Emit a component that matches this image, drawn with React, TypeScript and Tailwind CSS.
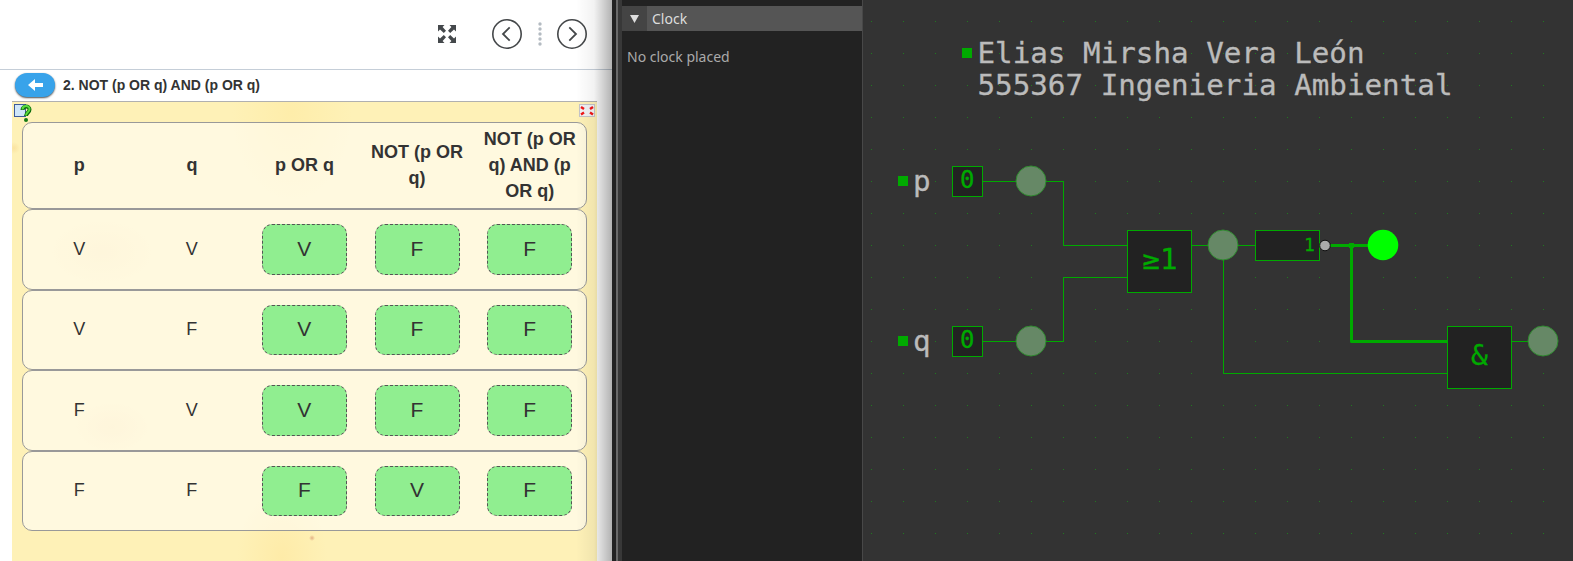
import React from "react";

const rows = [
  { h: "h-[81px]", cells: ["V", "V", "V", "F", "F"], box: "h-[51px]" },
  { h: "h-[80px]", cells: ["V", "F", "V", "F", "F"], box: "h-[50px]" },
  { h: "h-[81px]", cells: ["F", "V", "V", "F", "F"], box: "h-[51px]" },
  { h: "h-[80px]", cells: ["F", "F", "F", "V", "F"], box: "h-[50px]" },
];

function Toolbar() {
  return (
    <div className="flex h-[70px] shrink-0 items-start border-b border-[#c5ced8] pl-[438px] pt-[19px]">
      <svg width="18" height="18" viewBox="0 0 18 18" className="mt-[6px]" fill="#44484b">
        <path d="M0 0h6.500L4.600 2 8 5.800 5.800 8 2 4.600 0 6.500z" />
        <path d="M18 0h-6.500l1.900 2L10 5.800 12.200 8 16 4.600l2 1.900z" />
        <path d="M0 18h6.500L4.600 16 8 12.200 5.800 10 2 13.400l-2-1.900z" />
        <path d="M18 18h-6.500l1.900-2L10 12.200l2.200-2.200 3.800 3.400 2-1.900z" />
      </svg>
      <svg width="30" height="30" viewBox="0 0 30 30" className="ml-9" fill="none" stroke="#444749" strokeWidth="1.6">
        <circle cx="15" cy="15" r="14.2" />
        <path d="M17.700 8.300 11 15l6.700 6.700" strokeWidth="1.8" />
      </svg>
      <svg width="4" height="26" viewBox="0 0 4 26" className="ml-4 mt-[2px]" fill="#b4bbc2">
        {[3, 8, 13, 18, 23].map((y) => (
          <circle key={y} cx="2" cy={y} r="1.700" />
        ))}
      </svg>
      <svg width="30" height="30" viewBox="0 0 30 30" className="ml-[15px]" fill="none" stroke="#444749" strokeWidth="1.6">
        <circle cx="15" cy="15" r="14.2" />
        <path d="M12.300 8.300 19 15l-6.700 6.700" strokeWidth="1.8" />
      </svg>
    </div>
  );
}

function TruthTable() {
  return (
    <div className="ml-[10px] w-[565px]">
      <div className="flex h-[87px] items-center rounded-[10px] border border-[#999] bg-white/55 pb-[2px] text-center text-[18px] font-bold leading-[26px] text-[#333]">
        {["p", "q", "p OR q", "NOT (p OR q)", "NOT (p OR q) AND (p OR q)"].map((t) => (
          <div key={t} className="w-[112.8px] px-[8px]">{t}</div>
        ))}
      </div>
      {rows.map((r, i) => (
        <div key={i} className={`flex items-center rounded-[10px] border border-[#999] bg-white/55 text-[#333] ${r.h}`}>
          {r.cells.map((c, j) =>
            j < 2 ? (
              <div key={j} className="w-[112.8px] pb-px text-center text-[18px]">{c}</div>
            ) : (
              <div key={j} className="flex w-[113px] justify-center">
                <div className={`flex w-[85px] items-center justify-center rounded-[10px] border border-dashed border-[#555] bg-[#90ee90] pb-[2px] text-[21px] ${r.box}`}>
                  {c}
                </div>
              </div>
            ),
          )}
        </div>
      ))}
    </div>
  );
}

function Worksheet() {
  return (
    <div className="relative flex h-full w-[612px] shrink-0 flex-col overflow-hidden bg-white font-['Liberation_Sans',sans-serif]">
      <Toolbar />
      <div className="flex h-[30px] shrink-0 items-center pl-[15px]">
        <div className="flex h-6 w-10 items-center justify-center rounded-full bg-[#38a3ea] shadow-[0_1px_2px_rgba(0,0,0,0.7)]">
          <svg width="15" height="12" viewBox="0 0 15 12" fill="#fff">
            <path d="M7 0v4h8v4H7v4L0 6z" />
          </svg>
        </div>
        <h1 className="ml-2 whitespace-nowrap text-[14px] font-bold text-[#333]">2. NOT (p OR q) AND (p OR q)</h1>
      </div>
      <div className="mt-px ml-3 flex w-[585px] grow flex-col border-t border-[#b0b0b0] bg-[#fef1b7] bg-[radial-gradient(circle_at_2px_46px,#fae3a0_0,transparent_6px),radial-gradient(circle_at_300px_436px,#e3b184_0,transparent_3px),radial-gradient(ellipse_at_90px_150px,#fdebb0_0,transparent_50px),radial-gradient(ellipse_at_100px_325px,#fde9b0_0,transparent_36px),radial-gradient(ellipse_at_280px_10px,#feedaa_0,transparent_60px),radial-gradient(ellipse_at_270px_455px,#feeba8_0,transparent_45px)]">
        <div className="flex h-5 justify-between pl-[2px] pr-[2px] pt-[2px]">
          <svg width="17" height="18" viewBox="0 0 17 18" className="overflow-visible">
            <rect x=".5" y=".5" width="11" height="12" fill="#cfe6fa" stroke="#3c5a9a" />
            <path d="M8.500 6c0-4.500 7-4.500 7-.5 0 3.500-3.500 3-3.500 6.500" fill="none" stroke="#0a6a0a" strokeWidth="4" />
            <path d="M8.500 5.500c0-4.500 7-4.500 7-.5 0 3.500-3.500 3-3.500 6.500" fill="none" stroke="#5bdc3e" strokeWidth="2" />
            <circle cx="12" cy="16" r="2" fill="#137a13" />
          </svg>
          <svg width="16" height="13" viewBox="0 0 16 13">
            <rect width="16" height="13" fill="#c4c4c8" />
            <rect x="1" y="1" width="14" height="11" fill="#f2f2f4" />
            <path d="M2 3l3 2M14 3l-3 2M2 10.500l3-2M14 10.500l-3-2" stroke="#f01818" strokeWidth="2.400" />
          </svg>
        </div>
        <TruthTable />
      </div>
      <div className="pointer-events-none absolute inset-y-0 right-0 w-[36px] bg-linear-to-r from-transparent via-black/5 to-black/30" />
    </div>
  );
}

function ClockPanel() {
  return (
    <div className="flex h-full shrink-0 font-['Noto_Sans',sans-serif]">
      <div className="w-1 bg-[#222]" />
      <div className="w-[2px] bg-[#6a6a6a]" />
      <div className="w-1 bg-[#383838]" />
      <div className="w-[240px] bg-[#222] pt-[6px]">
        <div className="flex h-[25px] bg-[#555]">
          <div className="flex w-[25px] items-center justify-center bg-[#444]">
            <svg width="9" height="8" viewBox="0 0 9 8" fill="#ddd">
              <path d="M0 0h9L4.500 8z" />
            </svg>
          </div>
          <span className="pl-[5px] text-[14px] leading-[26px] text-[#ddd]">Clock</span>
        </div>
        <p className="pl-[5px] pt-[15px] text-[14px] leading-[21px] text-[#aaa]">No clock placed</p>
      </div>
      <div className="w-px bg-[#484848]" />
    </div>
  );
}

const dots: [number, number][] = [];
for (let x = 8; x < 710; x += 32) for (let y = 21; y < 561; y += 32) dots.push([x, y]);

function Circuit() {
  return (
    <svg width="710" height="561" viewBox="0 0 710 561" className="shrink-0 bg-[#333] font-['DejaVu_Sans_Mono',monospace]">
      {dots.map(([x, y]) => (
        <rect key={`${x}-${y}`} x={x} y={y} width="1" height="1" fill="#207820" />
      ))}
      <g fill="#0a0">
        <rect x="99" y="48" width="10" height="10" />
        <rect x="35" y="176" width="10" height="10" />
        <rect x="35" y="336" width="10" height="10" />
      </g>
      <g fill="#bbb" stroke="#bbb" strokeWidth=".3" fontSize="28">
        <text x="114.500" y="63" textLength="387" lengthAdjust="spacingAndGlyphs">Elias Mirsha Vera León</text>
        <text x="114.500" y="95" textLength="475" lengthAdjust="spacingAndGlyphs">555367 Ingenieria Ambiental</text>
        <text x="50" y="191" textLength="17.600" lengthAdjust="spacingAndGlyphs">p</text>
        <text x="50" y="351" textLength="17.600" lengthAdjust="spacingAndGlyphs">q</text>
      </g>
      <g fill="none" stroke="#0a0">
        <path d="M119 181.500h81.500v64h64M119 341.500h81.500v-64h64M329 245.500h64M360.500 245v128.500h224M649 341.500h22" />
        <path d="M467 245.500h38M488.500 245.500v96h96" strokeWidth="3" strokeLinejoin="round" />
      </g>
      <rect x="486" y="243" width="5" height="5" fill="#0a0" />
      <g fill="#222" stroke="#0a0">
        <rect x="89.500" y="166.500" width="30" height="30" />
        <rect x="89.500" y="326.500" width="30" height="30" />
        <rect x="264.500" y="230.500" width="64" height="62" />
        <rect x="392.500" y="230.500" width="64" height="30" />
        <rect x="584.500" y="326.500" width="64" height="62" />
      </g>
      <g fill="#668866" stroke="#2f8a2f">
        <circle cx="168" cy="181" r="15" />
        <circle cx="168" cy="341" r="15" />
        <circle cx="360" cy="245" r="15" />
        <circle cx="680" cy="341" r="15" />
      </g>
      <circle cx="520" cy="245" r="15.300" fill="#0f0" />
      <circle cx="462" cy="245.500" r="5.300" fill="#aaa" stroke="#111" />
      <g fill="#0a0" stroke="#0a0" strokeWidth=".3">
        <text x="97" y="188" fontSize="24">0</text>
        <text x="97" y="348" fontSize="24">0</text>
        <text x="279.500" y="269" fontSize="28" textLength="35" lengthAdjust="spacingAndGlyphs">≥1</text>
        <text x="441" y="251" fontSize="18">1</text>
        <text x="608" y="364.500" fontSize="28">&amp;</text>
      </g>
    </svg>
  );
}

export default function App() {
  return (
    <div className="flex h-[561px] w-[1573px] overflow-hidden bg-[#333]">
      <Worksheet />
      <ClockPanel />
      <Circuit />
    </div>
  );
}
